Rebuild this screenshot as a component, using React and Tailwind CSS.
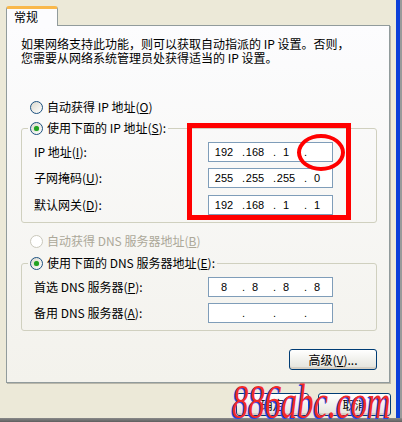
import { Fragment } from 'react';

function Radio({ checked, disabled }) {
  return (
    <span
      className={
        disabled
          ? 'flex h-[13px] w-[13px] shrink-0 items-center justify-center rounded-full border border-[#CAC8BB] bg-white'
          : 'flex h-[13px] w-[13px] shrink-0 items-center justify-center rounded-full border border-[#1C5180] bg-linear-to-br from-[#DCD9CE] to-white'
      }
    >
      {checked && <span className="h-[5px] w-[5px] rounded-full bg-[#21A121] shadow-[0_0_1px_#5CCB5C]" />}
    </span>
  );
}

function IpBox({ parts }) {
  return (
    <div className="flex h-[20px] w-[125px] items-center border border-[#7F9DB9] bg-white pl-[5px] font-['Liberation_Sans',sans-serif] text-[11px] leading-none">
      {parts.map((p, i) => (
        <Fragment key={i}>
          {i > 0 && <span className="w-[11px] text-right">.</span>}
          <span className="w-[20px] text-center">{p}</span>
        </Fragment>
      ))}
    </div>
  );
}

function Row({ label, parts, className }) {
  return (
    <div className={`flex items-center pl-[12px] ${className || ''}`}>
      <span className="w-[174px] whitespace-nowrap">{label}</span>
      <IpBox parts={parts} />
    </div>
  );
}

function XpButton({ children, className }) {
  return (
    <button
      className={`flex items-center justify-center rounded-[3px] border border-[#003C74] bg-linear-to-b from-white to-[#E3E3DB] text-[12px] leading-none text-black shadow-[inset_0_-2px_0_#D6D0C5] ${className || ''}`}
    >
      {children}
    </button>
  );
}

export default function App() {
  return (
    <div className="flex h-[422px] w-[402px] flex-col overflow-hidden bg-[#ECE9D8] font-['Noto_Sans_CJK_SC',sans-serif] text-[12px] text-black">
      <div className="flex flex-1">
        <div className="relative flex w-[396px] flex-col pl-[6px] pt-[6px]">
          {/* Tab */}
          <div className="relative z-10 -mb-px flex h-[20px] w-[52px] items-center rounded-t-[3px] border-x border-t-[3px] border-x-[#919B9C] border-t-[#F9B84B] bg-[#FCFCFE] pb-[1px] pl-[7px] leading-none">
            常规
          </div>

          {/* Panel */}
          <div className="flex h-[358px] w-[384px] flex-col border border-[#919B9C] bg-linear-to-b from-[#FCFCFE] to-[#F3F2EC] pl-[14px] pr-[12px] shadow-[1px_1px_0_#B9B7AA]">
            <p className="whitespace-nowrap pt-[11px] leading-[14px]">
              如果网络支持此功能，则可以获取自动指派的 IP 设置。否则，
              <br />
              您需要从网络系统管理员处获得适当的 IP 设置。
            </p>

            <div className="mt-[34px] flex h-[16px] items-center gap-[4px] pl-[9px] leading-none">
              <Radio />
              <span>自动获得 IP 地址(<u>O</u>)</span>
            </div>

            <fieldset className="mt-[5px] rounded-[3px] border border-[#D0D0BF] pb-[7px] pt-[6px]">
              <legend className="ml-[6px] px-[2px]">
                <div className="flex h-[16px] items-center gap-[4px] leading-none">
                  <Radio checked />
                  <span>使用下面的 IP 地址(<u>S</u>):</span>
                </div>
              </legend>
              <Row label={<>IP 地址(<u>I</u>):</>} parts={['192', '168', '1', '']} />
              <Row className="mt-[6px]" label={<>子网掩码(<u>U</u>):</>} parts={['255', '255', '255', '0']} />
              <Row className="mt-[7px]" label={<>默认网关(<u>D</u>):</>} parts={['192', '168', '1', '1']} />
            </fieldset>

            <div className="mt-[10px] flex h-[16px] items-center gap-[4px] pl-[9px] leading-none text-[#ACA899]">
              <Radio disabled />
              <span>自动获得 DNS 服务器地址(<u>B</u>)</span>
            </div>

            <fieldset className="mt-[6px] rounded-[3px] border border-[#D0D0BF] pb-[7px] pt-[6px]">
              <legend className="ml-[6px] px-[2px]">
                <div className="flex h-[16px] items-center gap-[4px] leading-none">
                  <Radio checked />
                  <span>使用下面的 DNS 服务器地址(<u>E</u>):</span>
                </div>
              </legend>
              <Row label={<>首选 DNS 服务器(<u>P</u>):</>} parts={['8', '8', '8', '8']} />
              <Row className="mt-[6px]" label={<>备用 DNS 服务器(<u>A</u>):</>} parts={['', '', '', '']} />
            </fieldset>

            <div className="mt-[18px] flex justify-end">
              <XpButton className="h-[21px] w-[88px]">
                高级(<u>V</u>)...
              </XpButton>
            </div>
          </div>

          {/* Dialog buttons */}
          <div className="mt-[10px] flex justify-end gap-[9px] pr-[5px]">
            <XpButton className="h-[23px] w-[73px]">确定</XpButton>
            <XpButton className="h-[23px] w-[73px]">取消</XpButton>
          </div>

          {/* Red annotation marks */}
          <div className="pointer-events-none absolute left-[187px] top-[123px] h-[97px] w-[164px] border-[5px] border-[#FF0000]" />
          <div className="pointer-events-none absolute left-[297px] top-[134px] h-[37px] w-[48px] rounded-[50%] border-[4px] border-[#FF0000]" />

          {/* Watermark */}
          <div className="pointer-events-none absolute left-[232px] top-[378px] origin-left scale-x-[0.68] whitespace-nowrap font-['Liberation_Serif',serif] text-[48px] italic leading-none text-[#F22A2A] [text-shadow:-2px_1px_0_#2448F0]">
            886abc.com
          </div>
        </div>
        <div className="w-[4px] bg-[#0B3FD9]" />
        <div className="w-[2px] bg-[#9A9A9A]" />
      </div>
      <div className="h-[4px] bg-linear-to-b from-[#8A8A8A] to-[#5E5E5E]" />
    </div>
  );
}
